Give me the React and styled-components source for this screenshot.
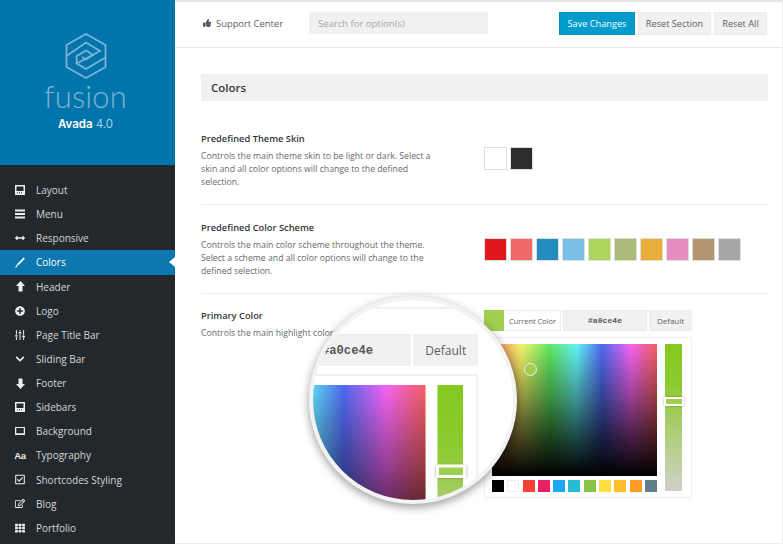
import React from 'react';
import styled, { createGlobalStyle } from 'styled-components';
import { FaThumbsUp, FaPlusCircle, FaChevronDown, FaRegCheckSquare, FaRegEdit, FaTh, FaArrowsAltH } from 'react-icons/fa';

const Global = createGlobalStyle`
  html, body { margin: 0; padding: 0; background: #fff; }
  * { box-sizing: border-box; }
`;
const Page = styled.div`
  width: 783px; height: 544px; display: flex; overflow: hidden; position: relative;
  font-family: "Open Sans", "Liberation Sans", sans-serif;
`;
const Sidebar = styled.aside`
  width: 175px; flex: none; background: #23282d; display: flex; flex-direction: column;
`;
const Brand = styled.div`
  height: 165px; background: #0074ab; display: flex; flex-direction: column; align-items: center; padding: 33px 4px 0 0;
`;
const BrandMark = styled.svg`
  width: 42px; height: 46px; display: block;
`;
const BrandWord = styled.div`
  font-family: Lato, sans-serif; font-weight: 300; font-size: 31px; line-height: 33px; color: #7db3d4; margin-top: 1px; letter-spacing: 0.2px;
`;
const Version = styled.div`
  font-size: 11.5px; line-height: 16px; color: #a9cfe6; margin-top: 3px; font-family: Inter, sans-serif;
  b { color: #fff; font-weight: 600; }
`;
const Menu = styled.nav`
  display: flex; flex-direction: column; padding-top: 13px;
`;
const Item = styled.div`
  height: 24.14px; display: flex; align-items: center; position: relative; flex: none;
  padding-left: 15px; gap: 11px; font-size: 10px; color: ${p => (p.$active ? '#fff' : '#d5d7d8')};
  background: ${p => (p.$active ? '#0d78af' : 'transparent')};
  ${p => p.$active ? `&::after { content: ""; position: absolute; right: 0; top: 50%; margin-top: -5px;
    border: 5px solid transparent; border-right: 6px solid #fff; border-left: 0; }` : ''}
`;
const IconCell = styled.span`
  width: 10px; height: 12px; display: flex; align-items: center; justify-content: center; flex: none; color: #eceded;
  svg { display: block; }
`;
const AaIcon = styled.span`
  font-size: 9.5px; font-weight: 700; letter-spacing: -0.3px; white-space: nowrap; font-family: "Liberation Sans", sans-serif;
`;
const Main = styled.main`
  flex: 1; min-width: 0; border-top: 2px solid #e6e6e6; border-right: 1px solid #ececec; border-bottom: 1px solid #ececec; display: flex; flex-direction: column;
`;
const TopBar = styled.header`
  height: 46px; flex: none; border-bottom: 1px solid #e8e8e8; display: flex; align-items: center; padding: 0 15px 3px 28px;
`;
const Support = styled.div`
  display: flex; align-items: center; gap: 5px; color: #5d6164; font-size: 9.4px; width: 106px; flex: none;
  svg { color: #55595c; }
`;
const Search = styled.div`
  width: 179px; height: 22px; background: #f2f1f1; color: #a5a7a9; font-size: 9.5px; padding-left: 9px; display: flex; align-items: center;
`;
const Actions = styled.div`
  margin-left: auto; display: flex; gap: 3px;
`;
const Btn = styled.div`
  height: 23px; width: ${p => p.$w}px; display: flex; align-items: center; justify-content: center; font-size: 9.2px; white-space: nowrap;
  background: ${p => (p.$primary ? '#009ccc' : '#f2f1f1')};
  color: ${p => (p.$primary ? '#fff' : '#5b5f62')};
  border: 1px solid ${p => (p.$primary ? '#0a8cc0' : '#ececec')};
`;
const Content = styled.div`
  padding: 26px 14px 0 26px;
`;
const SectionBar = styled.div`
  height: 27px; background: #f2f1f1; font-size: 11.5px; font-weight: 600; color: #33373a; display: flex; align-items: center; padding-left: 10px;
`;
const Row = styled.section`
  display: grid; grid-template-columns: 283px 1fr; padding-top: ${p => p.$top}px; height: ${p => p.$h}px;
  border-bottom: ${p => (p.$last ? 'none' : '1px solid #ededed')};
`;
const Title = styled.div`
  font-size: 9.3px; line-height: 13px; font-weight: 600; color: #333639;
`;
const Desc = styled.div`
  font-size: 8.7px; line-height: 12.8px; color: #66696c; margin-top: 5px; white-space: pre-line;
`;
const Swatches = styled.div`
  display: flex; gap: 3px; padding-top: ${p => p.$top}px; height: fit-content;
`;
const Swatch = styled.div`
  width: 23px; height: 23px; background: ${p => p.$c}; border: 1px solid ${p => p.$b || '#dedede'};
`;
const PickerCell = styled.div`
  padding-top: 1px;
`;
const PickerWrap = styled.div`
  width: 208px; display: flex; flex-direction: column; gap: 6px;
`;
const PickerHead = styled.div`
  display: flex; height: 21px; gap: 2px;
`;
const Current = styled.div`
  width: 77px; display: flex; align-items: stretch; border: 1px solid #ececec; font-size: 7.4px; color: #5d6164;
  span { display: flex; align-items: center; padding-left: 5px; }
`;
const CurrentChip = styled.div`
  width: 20px; background: #a0ce4e; flex: none; margin: -1px 0 -1px -1px;
`;
const Hex = styled.div`
  width: 84px; background: #f2f1f1; border: 1px solid #ececec; font-family: "Liberation Mono", monospace; font-size: 8.1px; font-weight: 700;
  color: #55585a; display: flex; align-items: center; justify-content: center;
`;
const DefaultBtn = styled.div`
  width: 43px; background: #f2f1f1; border: 1px solid #efefef; font-size: 8px; color: #5b5f62; display: flex; align-items: center; justify-content: center; padding-bottom: 1px;
`;
const PickerBox = styled.div`
  height: 161px; border: 1px solid #eee; padding: 6px 8px 0 7px; display: grid; grid-template-columns: 165px 17px; column-gap: 8px; background: #fff;
`;
const LeftCol = styled.div`
  display: flex; flex-direction: column; gap: 4px; position: relative;
`;
const SVArea = styled.div`
  height: 132px; position: relative;
  background:
    linear-gradient(to bottom, rgba(0,0,0,0) 0%, rgba(0,0,0,.38) 40%, rgba(0,0,0,.72) 72%, #000 100%),
    linear-gradient(to right, #f26a6a 0%, #f5a163 6%, #f5f56a 18%, #5fe85f 35%, #63f5f5 51%, #5068f0 67%, #f565f5 84%, #f55f63 100%);
`;
const Handle = styled.div`
  position: absolute; left: 32px; top: 19px; width: 13px; height: 13px; border-radius: 50%; border: 1.5px solid #f0f0f0; background: #a0ce4e;
`;
const Palette = styled.div`
  display: flex; justify-content: space-between;
`;
const PaletteChip = styled.div`
  width: 12px; height: 12px; background: ${p => p.$c}; outline: ${p => (p.$c === '#ffffff' ? '1px solid #eee' : 'none')}; outline-offset: -1px;
`;
const HueBar = styled.div`
  height: 147px; position: relative; background: linear-gradient(to bottom, #83c91f 0%, #8ccb2f 28%, #a5cb63 50%, #b9cf8f 72%, #cfcfca 100%);
`;
const HueThumb = styled.div`
  position: absolute; left: -1.5px; right: -1.5px; top: 53px; height: 9px; background: #a0ce4e; border: 2px solid #fff; box-shadow: 0 0 2px rgba(0,0,0,.35);
`;
const Lens = styled.div`
  position: absolute; left: 309px; top: 296px; width: 208px; height: 208px; border-radius: 50%; background: #fff; overflow: hidden;
  border: 4px solid #f3f3f3; box-shadow: 0 3px 10px rgba(0,0,0,.4);
`;
const LensInner = styled.div`
  position: absolute; left: ${p => p.$x}px; top: ${p => p.$y}px; transform: scale(1.5); transform-origin: 0 0;
`;
const LensRule = styled.div`
  height: 1px; background: #ededed; margin: 0 0 17px -100px; width: 300px;
`;

const LayoutIcon = () => (
  <svg width="10" height="10" viewBox="0 0 10 10"><path fill="currentColor" fillRule="evenodd" d="M0 0h10v10H0zM1.5 1.5v4.5h7V1.5zM2 7.2v1h1v-1zM4 7.2v1h1v-1zM6 7.2v1h1v-1z" /></svg>
);
const BarsIcon = () => (
  <svg width="10" height="10" viewBox="0 0 10 10"><path fill="currentColor" d="M0 .5h10v2H0zM0 4h10v2H0zM0 7.5h10v2H0z" /></svg>
);
const BrushIcon = () => (
  <svg width="10" height="11" viewBox="0 0 10 11"><path fill="#fff" d="M8.6.5 10 1.7 3 8.4 1.9 7.3zM1.5 7.8l1.1 1.1C2 10 1 10.6 0 10.7c.7-.7 1-1.8 1.5-2.9z" /></svg>
);
const UpIcon = () => (
  <svg width="9" height="11" viewBox="0 0 9 11"><path fill="currentColor" d="M4.5 0 9 5H6.5v5.5h-4V5H0z" /></svg>
);
const DownIcon = () => (
  <svg width="9" height="11" viewBox="0 0 9 11"><path fill="currentColor" d="M4.5 11 9 6H6.5V.5h-4V6H0z" /></svg>
);
const SlidersIcon = () => (
  <svg width="10" height="10" viewBox="0 0 10 10"><path fill="currentColor" d="M.9 0h1v4.8H.9zM.9 7h1v3h-1zM0 5.2h2.8v1.4H0zM4.5 0h1v1.6h-1zM4.5 4h1v6h-1zM3.6 2h2.8v1.4H3.6zM8.1 0h1v5.4h-1zM8.1 7.6h1V10h-1zM7.2 5.8H10v1.4H7.2z" /></svg>
);
const ScreenIcon = () => (
  <svg width="11" height="10" viewBox="0 0 11 10"><path fill="currentColor" fillRule="evenodd" d="M0 .5h11v9H0zM1.4 1.8v5.6h8.2V1.8z" /></svg>
);

const menu = [
  ['Layout', <LayoutIcon />], ['Menu', <BarsIcon />], ['Responsive', <FaArrowsAltH size={10} />],
  ['Colors', <BrushIcon />, true], ['Header', <UpIcon />], ['Logo', <FaPlusCircle size={10} />],
  ['Page Title Bar', <SlidersIcon />], ['Sliding Bar', <FaChevronDown size={10} />], ['Footer', <DownIcon />],
  ['Sidebars', <LayoutIcon />], ['Background', <ScreenIcon />], ['Typography', <AaIcon>Aa</AaIcon>],
  ['Shortcodes Styling', <FaRegCheckSquare size={11} />], ['Blog', <FaRegEdit size={11} />], ['Portfolio', <FaTh size={10} />],
];
const scheme = ['#e2171b', '#f06a6c', '#258cbf', '#78c0e5', '#add45d', '#abbb7a', '#e9ae3a', '#e68cbf', '#b39370', '#a6a6a6'];
const palette = ['#000000', '#ffffff', '#f44336', '#e91e63', '#1ea7f2', '#26bcd6', '#8bc34a', '#ffdf40', '#ffc02a', '#ff9b24', '#607d8b'];

const Picker = () => (
  <PickerWrap>
    <PickerHead>
      <Current><CurrentChip /><span>Current Color</span></Current>
      <Hex>#a0ce4e</Hex>
      <DefaultBtn>Default</DefaultBtn>
    </PickerHead>
    <PickerBox>
      <LeftCol>
        <SVArea><Handle /></SVArea>
        <Palette>{palette.map(c => <PaletteChip key={c} $c={c} />)}</Palette>
      </LeftCol>
      <HueBar><HueThumb /></HueBar>
    </PickerBox>
  </PickerWrap>
);

export default function App() {
  return (
    <Page>
      <Global />
      <Sidebar>
        <Brand>
          <BrandMark viewBox="0 0 42 46" fill="none" stroke="#7db3d4" strokeWidth="1.8" strokeLinejoin="miter">
            <path d="M21 1 40.5 12v22L21 45 1.5 34V12z" />
            <path d="M1.5 23 21 9.5 35 18 11.7 30.5 21 36l19.5-11.5" />
            <path d="M11.7 30.5V23L21 17.5l7 4.5-7 4.5-4-2.5" />
          </BrandMark>
          <BrandWord>fusion</BrandWord>
          <Version><b>Avada</b> 4.0</Version>
        </Brand>
        <Menu>
          {menu.map(([label, icon, active]) => (
            <Item key={label} $active={active}><IconCell>{icon}</IconCell>{label}</Item>
          ))}
        </Menu>
      </Sidebar>
      <Main>
        <TopBar>
          <Support><FaThumbsUp size={8} />Support Center</Support>
          <Search>Search for option(s)</Search>
          <Actions>
            <Btn $primary $w={76}>Save Changes</Btn>
            <Btn $w={73}>Reset Section</Btn>
            <Btn $w={53}>Reset All</Btn>
          </Actions>
        </TopBar>
        <Content>
          <SectionBar>Colors</SectionBar>
          <Row $h={104} $top={31}>
            <div>
              <Title>Predefined Theme Skin</Title>
              <Desc>{'Controls the main theme skin to be light or dark. Select a\nskin and all color options will change to the defined\nselection.'}</Desc>
            </div>
            <Swatches $top={15}>
              <Swatch $c="#ffffff" />
              <Swatch $c="#2d2d2f" />
            </Swatches>
          </Row>
          <Row $h={89} $top={16}>
            <div>
              <Title>Predefined Color Scheme</Title>
              <Desc>{'Controls the main color scheme throughout the theme.\nSelect a scheme and all color options will change to the\ndefined selection.'}</Desc>
            </div>
            <Swatches $top={17}>
              {scheme.map(c => <Swatch key={c} $c={c} />)}
            </Swatches>
          </Row>
          <Row $last $top={15}>
            <div>
              <Title>Primary Color</Title>
              <Desc>Controls the main highlight color th</Desc>
            </div>
            <PickerCell><Picker /></PickerCell>
          </Row>
        </Content>
      </Main>
      <Lens>
        <LensInner $x={-147} $y={6.5}>
          <LensRule />
          <Picker />
        </LensInner>
      </Lens>
    </Page>
  );
}
